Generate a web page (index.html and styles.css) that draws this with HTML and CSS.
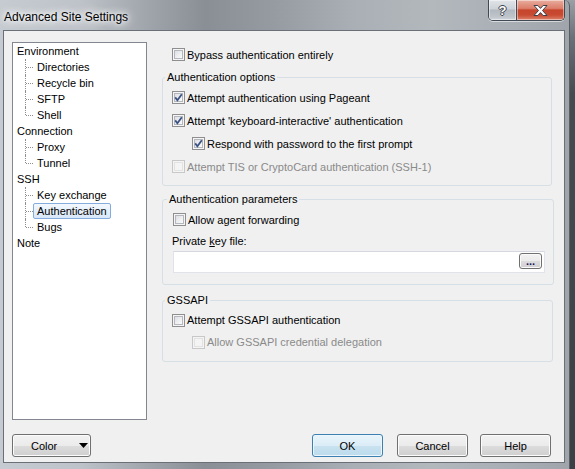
FILE: index.html
```html
<!DOCTYPE html>
<html>
<head>
<meta charset="utf-8">
<title>Advanced Site Settings</title>
<link rel="stylesheet" href="styles.css">
</head>
<body>
<div class="window">
  <div class="titlebar">
    <span class="title">Advanced Site Settings</span>
    <div class="caption-buttons">
      <span class="cap help">?</span>
      <span class="cap close">
        <svg width="15" height="11" viewBox="0 0 15 11"><polygon points="1,0.5 4.9,0.5 7.5,3.4 10.1,0.5 14,0.5 9.5,5.5 14,10.5 10.1,10.5 7.5,7.6 4.9,10.5 1,10.5 5.5,5.5" fill="#fff" stroke="#3a3f47" stroke-width="1"/></svg>
      </span>
    </div>
  </div>
  <div class="client">
    <div class="main">
      <ul class="tree">
        <li class="node"><span class="lbl">Environment</span>
          <ul class="children">
            <li class="child"><span class="lbl">Directories</span></li>
            <li class="child"><span class="lbl">Recycle bin</span></li>
            <li class="child"><span class="lbl">SFTP</span></li>
            <li class="child last"><span class="lbl">Shell</span></li>
          </ul>
        </li>
        <li class="node"><span class="lbl">Connection</span>
          <ul class="children">
            <li class="child"><span class="lbl">Proxy</span></li>
            <li class="child last"><span class="lbl">Tunnel</span></li>
          </ul>
        </li>
        <li class="node"><span class="lbl">SSH</span>
          <ul class="children">
            <li class="child"><span class="lbl">Key exchange</span></li>
            <li class="child"><span class="lbl selected">Authentication</span></li>
            <li class="child last"><span class="lbl">Bugs</span></li>
          </ul>
        </li>
        <li class="node"><span class="lbl">Note</span></li>
      </ul>

      <div class="panel">
        <div class="opt top-opt">
          <span class="check"><span class="inner"></span></span>
          <span class="text">Bypass authentication entirely</span>
        </div>

        <fieldset class="group g1">
          <legend>Authentication options</legend>
          <div class="gbody b1">
            <div class="opt">
              <span class="check on"><span class="inner"></span><svg viewBox="0 0 13 13"><polyline points="3.2,6.4 5.4,9.2 9.8,3.2" fill="none" stroke="#3c5283" stroke-width="1.8"/></svg></span>
              <span class="text">Attempt authentication using Pageant</span>
            </div>
            <div class="opt">
              <span class="check on"><span class="inner"></span><svg viewBox="0 0 13 13"><polyline points="3.2,6.4 5.4,9.2 9.8,3.2" fill="none" stroke="#3c5283" stroke-width="1.8"/></svg></span>
              <span class="text">Attempt 'keyboard-interactive' authentication</span>
            </div>
            <div class="opt indent">
              <span class="check on"><span class="inner"></span><svg viewBox="0 0 13 13"><polyline points="3.2,6.4 5.4,9.2 9.8,3.2" fill="none" stroke="#3c5283" stroke-width="1.8"/></svg></span>
              <span class="text">Respond with password to the first prompt</span>
            </div>
            <div class="opt disabled">
              <span class="check"><span class="inner"></span></span>
              <span class="text">Attempt TIS or CryptoCard authentication (SSH-1)</span>
            </div>
          </div>
        </fieldset>

        <fieldset class="group g2">
          <legend>Authentication parameters</legend>
          <div class="gbody b2">
            <div class="opt">
              <span class="check"><span class="inner"></span></span>
              <span class="text">Allow agent forwarding</span>
            </div>
            <div class="field-label">Private <u>k</u>ey file:</div>
            <div class="textbox">
              <span class="browse">...</span>
            </div>
          </div>
        </fieldset>

        <fieldset class="group g3">
          <legend>GSSAPI</legend>
          <div class="gbody b3">
            <div class="opt">
              <span class="check"><span class="inner"></span></span>
              <span class="text">Attempt GSSAPI authentication</span>
            </div>
            <div class="opt indent disabled">
              <span class="check"><span class="inner"></span></span>
              <span class="text">Allow GSSAPI credential delegation</span>
            </div>
          </div>
        </fieldset>
      </div>
    </div>

    <div class="footer">
      <span class="btn color-btn"><span class="btn-text">Color</span><svg class="arrow" width="9" height="5" viewBox="0 0 9 5"><polygon points="0,0 9,0 4.5,5" fill="#000"/></svg></span>
      <span class="btn default ok">OK</span>
      <span class="btn cancel">Cancel</span>
      <span class="btn help-btn">Help</span>
    </div>
  </div>
</div>
</body>
</html>
```
FILE: styles.css
```css
* { box-sizing: border-box; }
html, body { margin: 0; padding: 0; }
body {
  width: 575px;
  height: 469px;
  overflow: hidden;
  background: linear-gradient(#9aa0a6 0, #6a7077 8%, #464b52 20%, #3b4046 100%);
  font-family: "Liberation Sans", Arial, sans-serif;
  font-size: 11px;
  color: #000;
}

.window {
  width: 570px;
  height: 469px;
  display: flex;
  flex-direction: column;
  padding: 0 4px 6px 3px;
  border-right: 1px solid #5a5f66;
  border-top-right-radius: 6px;
  background:
    linear-gradient(to right, #c6cbd1 0%, #bec3c9 14%, #a0a5ab 26%, #8a8f95 36%, #969ba1 48%, #aaafb5 62%, #b3b8bd 76%, #a8aeb4 90%, #a0a5ab 100%);
}

.titlebar {
  height: 30px;
  display: flex;
  justify-content: space-between;
  align-items: flex-start;
}
.title {
  font-size: 12px;
  line-height: 15px;
  padding-top: 10px;
  padding-left: 1px;
  color: #000;
  text-shadow: 0 0 4px #fff, 0 0 8px #fff, 0 0 12px rgba(255,255,255,0.9), 0 0 16px rgba(255,255,255,0.7);
}
.caption-buttons {
  display: flex;
  height: 21px;
  border: 1px solid #414955;
  border-top: none;
  border-radius: 0 0 5px 5px;
  overflow: hidden;
  box-shadow: 0 1px 0 rgba(255,255,255,0.55);
}
.cap {
  display: flex;
  align-items: center;
  justify-content: center;
  height: 100%;
  box-shadow: inset 0 0 0 1px rgba(255,255,255,0.45);
}
.cap.help {
  width: 28px;
  border-right: 1px solid #414955;
  background: linear-gradient(#e1e5e9 0%, #cdd2d8 45%, #b2b8bf 50%, #bfc5cb 85%, #d3d8dd 100%);
  color: #fff;
  font-weight: bold;
  font-size: 13px;
  line-height: 13px;
  padding-top: 1px;
  text-shadow: 1px 0 0 #3e444c, -1px 0 0 #3e444c, 0 1px 0 #3e444c, 0 -1px 0 #3e444c;
}
.cap.close {
  width: 47px;
  background: linear-gradient(#e8ad9f 0%, #dc7e69 42%, #c6452d 50%, #c84a31 75%, #dd826c 100%);
}
.cap.close svg { display: block; }

.client {
  flex: 1;
  display: flex;
  flex-direction: column;
  background: #f0f0f0;
  border: 1px solid #6a7077;
}

.main {
  display: flex;
  height: 389px;
  padding: 11px 0 0 8px;
  gap: 15px;
}

/* Tree */
.tree {
  width: 135px;
  height: 378px;
  margin: 0;
  padding: 0 0 0 4px;
  list-style: none;
  background: #fff;
  border: 1px solid #828790;
  line-height: 16px;
}
.tree ul { list-style: none; margin: 0; padding: 0; }
.node > .lbl { display: block; height: 16px; }
.children { margin-left: 8px !important; }
.child {
  position: relative;
  height: 16px;
  padding-left: 8px;
}
.child::before {
  content: "";
  position: absolute;
  left: 0;
  top: 0;
  bottom: 0;
  border-left: 1px dotted #8e8e8e;
}
.child.last::before { bottom: 8px; }
.child::after {
  content: "";
  position: absolute;
  left: 1px;
  top: 8px;
  width: 7px;
  border-top: 1px dotted #8e8e8e;
}
.child .lbl {
  display: inline-block;
  height: 16px;
  line-height: 14px;
  padding: 0 3px;
  border: 1px solid transparent;
  border-radius: 2px;
}
.child .lbl.selected {
  border-color: #84acdd;
  background: linear-gradient(#f3f8fe, #d8e7f9);
}

/* Right panel */
.panel {
  width: 392px;
  padding-top: 1px;
  display: flex;
  flex-direction: column;
}
.opt {
  display: flex;
  align-items: center;
  height: 23px;
}
.top-opt { padding-left: 10px; }
.opt .text { margin-left: 2px; white-space: nowrap; }
.opt.indent { margin-left: 20px; }
.opt.disabled .text { color: #8a8a8a; }

.check {
  display: grid;
  width: 13px;
  height: 13px;
  flex: none;
  border: 1px solid #8f8f8f;
  background: #f5f5f5;
  padding: 1px;
}
.check > * { grid-area: 1 / 1; }
.check .inner {
  width: 9px;
  height: 9px;
  border: 1px solid #b4b8be;
  background: linear-gradient(135deg, #dcdee2 0%, #eceef0 50%, #fbfbfb 100%);
}
.check svg {
  width: 13px;
  height: 13px;
  margin: -2px;
}
.opt.disabled .check { border-color: #c8c8c8; background: #f4f4f4; }
.opt.disabled .check .inner { border-color: #e2e2e2; background: #f4f4f4; }

.group {
  margin: 0;
  padding: 0;
  min-width: 0;
  border: 1px solid #d5dfe5;
  border-radius: 3px;
}
.group legend {
  font-size: 11px;
  line-height: 14px;
  padding: 0 2px;
  margin-left: 2px;
}
.g1 { margin: 4px 2px 0 0; }
.g2 { margin: 6px 0 0 0; }
.g2 legend { margin-left: 4px; }
.g3 { margin: 8px 1px 0 0; }

.b1 { padding: 2px 0 7px 9px; }
.b2 { padding: 2px 0 11px 10px; }
.b3 { padding: 2px 0 8px 9px; }
.b3 .opt { height: 22px; }

.field-label {
  margin-top: 3px;
  margin-left: -1px;
  line-height: 14px;
}
.textbox {
  margin-top: 3px;
  width: 372px;
  height: 22px;
  background: #fff;
  border: 1px solid #e2e3ea;
  border-top-color: #d5d8de;
  display: flex;
  justify-content: flex-end;
  align-items: flex-start;
  padding: 1px 2px 0 0;
}
.browse {
  width: 23px;
  height: 16px;
  border: 1px solid #707070;
  border-radius: 3px;
  background: linear-gradient(#f2f2f2 0%, #ebebeb 50%, #dddddd 50%, #cfcfcf 100%);
  box-shadow: inset 0 0 0 1px #fbfbfb;
  color: #1b1464;
  font-weight: bold;
  font-size: 11px;
  line-height: 14px;
  text-align: center;
}

/* Footer */
.footer {
  margin-top: 14px;
  display: flex;
  height: 23px;
  padding: 0 13px 0 8px;
}
.btn {
  height: 23px;
  width: 71px;
  display: flex;
  align-items: center;
  justify-content: center;
  border: 1px solid #707070;
  border-radius: 3px;
  background: linear-gradient(#f2f2f2 0%, #ebebeb 50%, #dddddd 50%, #cfcfcf 100%);
  box-shadow: inset 0 0 0 1px #fcfcfc;
  font-size: 11px;
}
.color-btn {
  width: 79px;
  margin-right: auto;
  justify-content: flex-start;
  padding-left: 18px;
}
.color-btn .arrow { margin-left: 22px; }
.btn.default {
  border-color: #3c7fb1;
  background: linear-gradient(#e8f4fb 0%, #dcedf7 50%, #c9e2f0 50%, #bcdbec 100%);
  box-shadow: inset 0 0 0 1px #ecf6fc;
}
.cancel { margin-left: 14px; }
.help-btn { margin-left: 12px; }
```
